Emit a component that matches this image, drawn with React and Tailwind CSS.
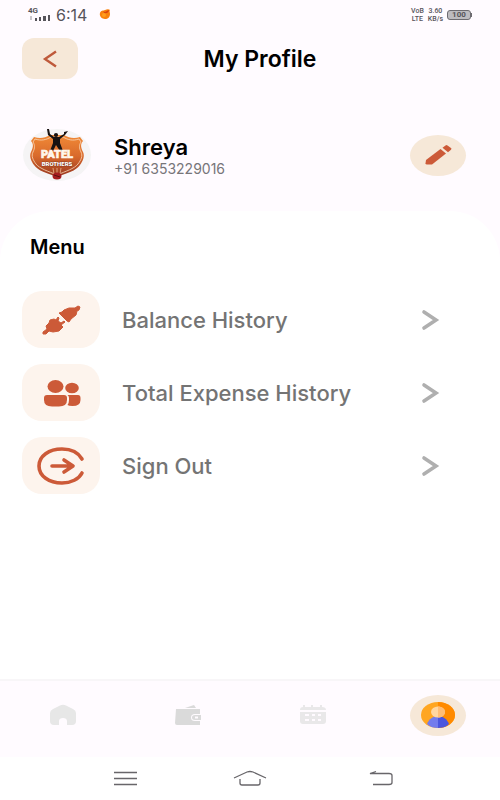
import React, { useState } from 'react';

const SignalIcon = () => (
  <svg className="h-2 w-6" viewBox="0 0 24 8" fill="#56545a" aria-hidden="true">
    <rect x="2" y="2" width="2" height="4" fill="#c9c6cb" />
    <rect x="7" y="4" width="2" height="3" />
    <rect x="11" y="3" width="2" height="4" />
    <rect x="15" y="2" width="3" height="5" />
    <rect x="20" y="1" width="2" height="6" />
  </svg>
);

const FlameIcon = () => (
  <svg className="h-3 w-3" viewBox="0 0 12 12" aria-hidden="true">
    <path d="M1 4C2 1 4 2 6 1c2-1 4-1 5 0-1 1 0 2 0 4 0 3-2 5-5 5S0 7 1 4Z" fill="#f9820b" />
    <path d="M4 2c2 2 3 0 6-1 0 2-2 4-5 3Z" fill="#d9430a" />
    <circle cx="5" cy="6" r="2" fill="#ff9d1c" />
  </svg>
);

const BackIcon = () => (
  <svg className="h-5 w-4" viewBox="0 0 16 20" fill="none" stroke="#bf5a3b" strokeWidth="2.4" aria-hidden="true">
    <path d="M14 2.5 3 10l11 7.5" />
  </svg>
);

const TeamLogo = () => (
  <svg className="h-14 w-[70px] shrink-0" viewBox="0 0 70 56" role="img" aria-label="Patel Brothers">
    <defs>
      <linearGradient id="shield" x1="0" y1="0" x2="0" y2="1">
        <stop offset="0" stopColor="#f18a36" />
        <stop offset="0.5" stopColor="#d96a2c" />
        <stop offset="1" stopColor="#96361f" />
      </linearGradient>
    </defs>
    <ellipse cx="35" cy="28" rx="34" ry="26" fill="#f5f4f5" />
    <path d="M12 10c6 2 11 1 16-2h14c5 3 10 4 16 2l3 4c-3 3-2 7 0 11 2 4 0 9-3 13-4 6-13 8-23 12-10-4-19-6-23-12-3-4-5-9-3-13 2-4 3-8 0-11Z" fill="url(#shield)" />
    <path d="M13 12c6 2 11 1 16-2h12c5 3 10 4 16 2l2 3c-2 3-2 6 0 10 2 4 0 8-3 12-4 5-12 7-21 11-9-4-17-6-21-11-3-4-5-8-3-12 2-4 2-7 0-10Z" fill="none" stroke="#f9d7b8" strokeWidth="0.8" />
    <circle cx="34" cy="8" r="2.1" fill="#171211" />
    <path d="m25 2 2 0 1 5 4 3h5l5-3 0-2 4-1-3 4-5 4v4l3 8h-3l-4-6-3 6h-3l3-8v-4l-5-4Z" fill="#171211" />
    <text x="35" y="31" textAnchor="middle" fontFamily="Roboto, sans-serif" fontSize="11" fontWeight="900" fill="#fff7ec" stroke="#fff7ec" strokeWidth="0.6">PATEL</text>
    <text x="35" y="39" textAnchor="middle" fontFamily="Roboto, sans-serif" fontSize="6" fontWeight="900" fill="#fff" stroke="#6d2918" strokeWidth="0.6" paintOrder="stroke">BROTHERS</text>
    <path d="M31 41l1 6M35 41v6M39 41l-1 6" stroke="#f0b78f" strokeWidth="0.8" />
    <ellipse cx="35" cy="49" rx="4.5" ry="3.5" fill="#a51d20" />
    <path d="m32 48 6 2" stroke="#5a1010" />
  </svg>
);

const EditIcon = () => (
  <svg className="h-6 w-8" viewBox="0 0 32 24" fill="#cc5a38" aria-hidden="true">
    <path d="M4 17 18.500 6l5.500 4.500L10 21.500H5q-1.500 0-1.500-1.200Z" />
    <path d="m20.500 4.800 3-2.300q1-.8 2 0l3.500 2.500q1 .9 0 1.700l-3 2.500Z" />
  </svg>
);

const PlugIcon = () => (
  <svg className="h-9 w-12" viewBox="0 0 48 36" fill="#cc5a38" stroke="#cc5a38" strokeLinejoin="round" aria-hidden="true">
    <path d="m22 11 3-1 2-2 5-2 6 0 3-2 2 1-1 3-2 1-1 4-5 4-2 3-2-1Z" />
    <path d="m6 30 4-3-1-3 3-3 1-3 4-1 2 1 2-3 1 1-1 3 3 2 3-2 1 1-4 3 2 2-4 4-6 1-4-1-3 3H6Z" />
  </svg>
);

const PeopleIcon = () => (
  <svg className="h-9 w-12" viewBox="0 0 48 36" fill="#cc5a38" aria-hidden="true">
    <ellipse cx="18.500" cy="11.500" rx="8" ry="6.500" />
    <ellipse cx="35" cy="13" rx="6.800" ry="5.200" />
    <path d="M7 23q0-3 3-3h17q3 0 3 3v2q0 6.500-8 6.500h-7q-8 0-8-6.500Z" />
    <path d="M30.500 20H41q2.500 0 2.500 3v2q0 6-8 6-4 0-5-1 1.500-2 1.500-5v-2q0-2-1.500-3Z" />
  </svg>
);

const SignOutIcon = () => (
  <svg className="h-10 w-12" viewBox="0 0 48 40" fill="none" stroke="#cc5a38" strokeWidth="3.6" strokeLinecap="round" strokeLinejoin="round" aria-hidden="true">
    <path d="M45 13C41 6 33 3 25 3 12 3 2 10 2 20s10 17 23 17c9 0 17-4 20-10" />
    <path d="M15 20h20M27 14l9 6-9 6" />
  </svg>
);

const ArrowIcon = () => (
  <svg className="h-6 w-5 shrink-0" viewBox="0 0 20 24" fill="none" stroke="#afafaf" strokeWidth="3.6" strokeLinecap="round" aria-hidden="true">
    <path d="m4 4 12 8-12 8" />
  </svg>
);

const HomeIcon = () => (
  <svg className="h-6 w-7" viewBox="0 0 28 24" fill="#e7e7e7" aria-hidden="true">
    <path d="M11 2.500q3-1.500 6 0l7 3.500q3 1.500 3 4v8q0 4-4 4h-5v-4c0-2-1.600-3-4-3s-4 1-4 3v4H5q-4 0-4-4v-8q0-2.500 3-4Z" />
  </svg>
);

const WalletIcon = () => (
  <svg className="h-6 w-7" viewBox="0 0 28 24" fill="#dadada" aria-hidden="true">
    <path d="m11 5 9-3 2 3Z" />
    <path d="M2 6h24v5h-5q-4 0-4 3.500t4 3.500h5v4H3q-2 0-2-2Z" />
    <path fillRule="evenodd" d="M21 12h6v5h-6q-3 0-3-2.500T21 12Zm0 1.500v2h3v-2Z" />
  </svg>
);

const CalendarIcon = () => (
  <svg className="h-6 w-7" viewBox="0 0 28 24" aria-hidden="true">
    <path d="M1 7q0-3 3-3V2h2v2h6V2h2v2h7V2h2v2q4 0 4 3ZM1 9h26v9q0 3-3 3H4q-3 0-3-3Z" fill="#e9e8e9" />
    <path d="M6 11h4v2H6zM13 11h3v2h-3zM19 11h3v2h-3zM6 16h4v2H6zM13 16h3v2h-3zM19 16h3v2h-3z" fill="#fffaff" />
  </svg>
);

const ProfileIcon = () => (
  <svg className="h-[26px] w-[34px]" viewBox="0 0 34 26" aria-hidden="true">
    <ellipse cx="17" cy="13" rx="17" ry="13" fill="#ffa621" />
    <path d="M17 0c9.400 0 17 5.800 17 13s-7.600 13-17 13Z" fill="#ff8a00" />
    <path d="M6 22C8 17 12 14 17 14v12c-4 0-8-1-11-4Z" fill="#737ced" />
    <path d="M28 22c-2-5-6-8-11-8v12c4 0 8-1 11-4Z" fill="#4a56df" />
    <ellipse cx="17" cy="10" rx="7" ry="5.500" fill="#ffd6a0" />
    <path d="M17 4.500c4 0 7 2.500 7 5.500s-3 5.500-7 5.500Z" fill="#ffbd75" />
  </svg>
);

const menuItems = [
  { label: 'Balance History', Icon: PlugIcon },
  { label: 'Total Expense History', Icon: PeopleIcon },
  { label: 'Sign Out', Icon: SignOutIcon },
];

const tabs = [
  { label: 'Home', Icon: HomeIcon },
  { label: 'Wallet', Icon: WalletIcon },
  { label: 'Calendar', Icon: CalendarIcon },
  { label: 'Profile', Icon: ProfileIcon },
];

const StatusBar = () => (
  <div className="flex h-[30px] items-center justify-between px-7 font-[Roboto,sans-serif] text-[#56545a]">
    <div className="flex items-center">
      <div className="flex flex-col text-[8px] leading-[6px] font-bold">
        <span>4G</span>
        <SignalIcon />
      </div>
      <span className="ml-1 font-[Inter,sans-serif] text-base leading-5">6:14</span>
      <span className="ml-3">
        <FlameIcon />
      </span>
    </div>
    <div className="flex items-center gap-1 text-center text-[7px] leading-[8px] font-medium">
      <div className="flex flex-col">
        <span>VoB</span>
        <span>LTE</span>
      </div>
      <div className="flex flex-col">
        <span>3.60</span>
        <span>KB/s</span>
      </div>
      <div className="flex items-center">
        <span className="flex h-[10px] w-6 items-center justify-center rounded-[3px] border border-[#6d6b70] bg-[#bdbbbf] text-[8px] font-bold">100</span>
        <span className="h-1 w-px bg-[#6d6b70]" />
      </div>
    </div>
  </div>
);

const App = () => {
  const [activeTab, setActiveTab] = useState('Profile');

  return (
    <div className="flex min-h-screen flex-col bg-[#fffbff] font-[Inter,sans-serif]">
      <StatusBar />

      <header className="grid grid-cols-[56px_1fr_56px] items-center px-[22px] pt-2">
        <button type="button" aria-label="Back" className="flex h-[41px] items-center justify-center rounded-xl bg-[#f6e8d8]">
          <BackIcon />
        </button>
        <h1 className="pl-5 text-center text-[23px] leading-6 font-semibold text-black">My Profile</h1>
      </header>

      <section className="flex items-center px-[22px] pt-12 pb-7">
        <TeamLogo />
        <div className="ml-[22px] flex-1 pt-1">
          <h2 className="text-[22px] leading-6 font-semibold text-black">Shreya</h2>
          <p className="text-sm leading-5 text-[#777579]">+91 6353229016</p>
        </div>
        <button type="button" aria-label="Edit profile" className="mr-3 flex h-[41px] w-14 items-center justify-center rounded-[50%] bg-[#f6e8d8]">
          <EditIcon />
        </button>
      </section>

      <main className="flex-1 rounded-t-[50px] bg-white px-[22px] pt-6">
        <h2 className="pl-2 text-xl leading-6 font-semibold text-black">Menu</h2>
        <ul className="mt-8 space-y-4">
          {menuItems.map(({ label, Icon }) => (
            <li key={label}>
              <button type="button" className="flex w-full items-center pr-[38px] text-left">
                <span className="flex h-[57px] w-[78px] shrink-0 items-center justify-center rounded-[20px] bg-[#fdf4ed]">
                  <Icon />
                </span>
                <span className="ml-[22px] flex-1 text-[22px] leading-6 font-medium text-[#747474]">{label}</span>
                <ArrowIcon />
              </button>
            </li>
          ))}
        </ul>
      </main>

      <nav className="grid h-[78px] grid-cols-4 items-center border-t-2 border-[#f8f6f8] pb-2">
        {tabs.map(({ label, Icon }) => (
          <button
            key={label}
            type="button"
            aria-label={label}
            onClick={() => setActiveTab(label)}
            className={`mx-auto flex h-[41px] w-14 items-center justify-center rounded-[50%] ${activeTab === label ? 'bg-[#f6e8d8]' : ''}`}
          >
            <Icon />
          </button>
        ))}
      </nav>

      {/* Android navigation keys */}
      <footer className="flex h-[43px] items-center justify-between bg-white px-[105px]">
        <button type="button" aria-label="Recent apps">
          <svg className="h-5 w-10" viewBox="0 0 40 20" fill="none" stroke="#68666a" strokeWidth="1.3">
            <path d="M9 3.500h23M9 9.500h23M9 15.500h23" />
          </svg>
        </button>
        <button type="button" aria-label="Home screen">
          <svg className="h-5 w-10" viewBox="0 0 40 20" fill="none" stroke="#68666a" strokeWidth="1.3">
            <path d="m4 9 13-6q3-1 6 0l13 6M10 10v4q0 2 2 2h16q2 0 2-2v-4" />
          </svg>
        </button>
        <button type="button" aria-label="Go back">
          <svg className="h-5 w-10" viewBox="0 0 40 20" fill="none" stroke="#68666a" strokeWidth="1.3">
            <path d="m21 2.500-6 2h19q3 0 3 2v7q0 2-3 2H18" />
          </svg>
        </button>
      </footer>
    </div>
  );
};

export default App;
